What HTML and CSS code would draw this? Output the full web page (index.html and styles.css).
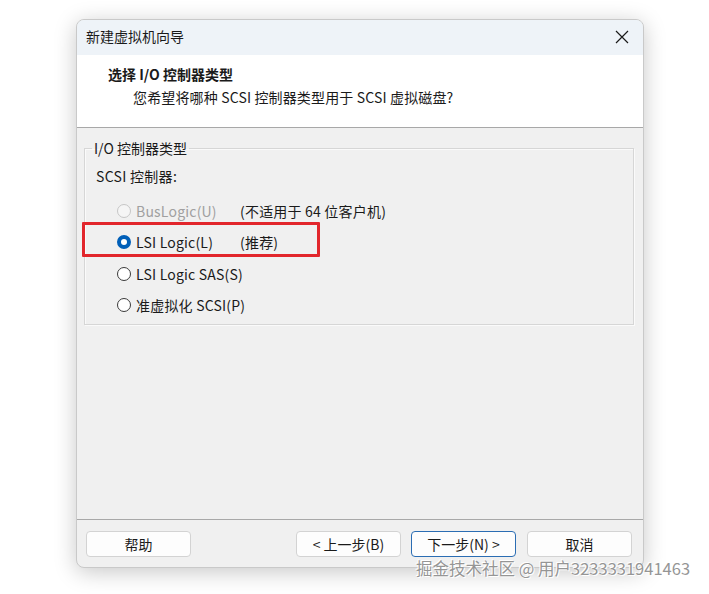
FILE: index.html
```html
<!DOCTYPE html>
<html lang="zh-CN">
<head>
<meta charset="utf-8">
<link rel="stylesheet" href="styles.css">
</head>
<body>
<div class="window">
  <div class="titlebar">
    <span class="title">新建虚拟机向导</span>
    <svg class="close" width="14" height="14" viewBox="0 0 14 14"><path d="M1 1 L13 13 M13 1 L1 13" stroke="#1a1a1a" stroke-width="1.2" fill="none"/></svg>
  </div>
  <div class="header">
    <div class="h-title">选择 I/O 控制器类型</div>
    <div class="h-sub">您希望将哪种 SCSI 控制器类型用于 SCSI 虚拟磁盘?</div>
  </div>
  <div class="content">
    <fieldset class="group">
      <legend>I/O 控制器类型</legend>
      <div class="caption">SCSI 控制器:</div>
      <div class="rows">
        <div class="row disabled"><span class="radio"></span><span class="lbl">BusLogic(U)</span><span class="note">(不适用于 64 位客户机)</span></div>
        <div class="row"><span class="radio checked"></span><span class="lbl">LSI Logic(L)</span><span class="note">(推荐)</span></div>
        <div class="row"><span class="radio"></span><span class="lbl">LSI Logic SAS(S)</span></div>
        <div class="row"><span class="radio"></span><span class="lbl">准虚拟化 SCSI(P)</span></div>
      </div>
    </fieldset>
    <div class="highlight"></div>
  </div>
  <div class="footer">
    <button class="btn">帮助</button>
    <span class="spacer"></span>
    <button class="btn">&lt; 上一步(B)</button>
    <button class="btn primary">下一步(N) &gt;</button>
    <button class="btn cancel">取消</button>
  </div>
</div>
<div class="watermark">掘金技术社区 @ 用户3233331941463</div>
</body>
</html>
```
FILE: styles.css
```css
html, body {
  margin: 0;
  padding: 0;
  background: #ffffff;
  width: 709px;
  height: 594px;
  overflow: hidden;
  font-family: "Noto Sans CJK SC", "Noto Sans", sans-serif;
  font-size: 14px;
  color: #1a1a1a;
}
body { position: relative; padding-top: 19px; box-sizing: border-box; }
.window {
  margin-left: 76px;
  width: 568px;
  height: 549px;
  box-sizing: border-box;
  border: 1px solid #c9c9c9;
  border-radius: 8px;
  overflow: hidden;
  background: #f0f0f0;
  box-shadow: 0 4px 22px rgba(0,0,0,0.22);
  display: flex;
  flex-direction: column;
}
.titlebar {
  height: 35px;
  background: #eef3f8;
  display: flex;
  align-items: center;
  padding: 0 14px 3px 9px;
  box-sizing: border-box;
  justify-content: space-between;
}
.title { font-size: 14px; line-height: 20px; }
.close { margin-top: 2px; }
.header {
  height: 73px;
  background: #ffffff;
  border-bottom: 1px solid #a8a8a8;
  box-sizing: border-box;
  padding: 9px 0 0 31px;
}
.h-title { font-weight: bold; font-size: 14px; line-height: 20px; }
.h-sub { font-size: 14px; line-height: 20px; margin-top: 3px; padding-left: 25px; letter-spacing: 0.15px; }
.content {
  position: relative;
  flex: 1;
  padding: 11px 9px 0 7px;
  border-bottom: 1px solid #a8a8a8;
}
.group {
  margin: 0;
  padding: 0 0 4px 0;
  border: 1px solid #d6d6d6;
  box-shadow: inset 1px 1px 0 #fafafa, 1px 1px 0 #fafafa;
  height: 186px;
  box-sizing: border-box;
}
.group legend {
  margin-left: 7px;
  padding: 0 2px;
  font-size: 14px;
  line-height: 18px;
}
.caption { padding-left: 11px; line-height: 20px; margin-top: 9px; letter-spacing: 0.3px; }
.rows { margin-top: 9px; }
.row {
  display: flex;
  align-items: center;
  height: 31.5px;
  padding-left: 32px;
  white-space: nowrap;
}
.radio {
  width: 14px;
  height: 14px;
  border-radius: 50%;
  border: 1px solid #3a3a3a;
  box-sizing: border-box;
  background: #fff;
  margin-right: 5px;
  flex: none;
}
.radio.checked {
  border: 4px solid #005fb8;
  background: #fff;
}
.disabled .radio { border-color: #c6c6c6; background: #f5f5f5; }
.disabled .lbl { color: #a0a0a0; }
.lbl { width: 104px; flex: none; letter-spacing: 0.2px; }
.note { flex: none; letter-spacing: 0.2px; }
.highlight {
  position: absolute;
  left: 5px;
  top: 94px;
  width: 238px;
  height: 35px;
  border: 3px solid #e2262c;
  box-sizing: border-box;
  border-radius: 1px;
}
.footer {
  height: 47px;
  display: flex;
  align-items: flex-start;
  padding: 11px 11px 0 9px;
  box-sizing: border-box;
  gap: 10px;
}
.spacer { flex: 1; }
.btn {
  width: 105px;
  height: 26px;
  background: #fdfdfd;
  border: 1px solid #d3d3d3;
  border-radius: 4px;
  font-family: "Noto Sans CJK SC", "Noto Sans", sans-serif;
  font-size: 14px;
  color: #1a1a1a;
  padding: 0;
  line-height: 1;
}
.btn.primary { border-color: #2b6db3; }
.btn.cancel { margin-left: 1px; }
.watermark {
  position: absolute;
  left: 416px;
  top: 556px;
  font-size: 16.5px;
  line-height: 24px;
  color: #959595;
  text-shadow: 0 0 1px #fff, 1px 1px 0 #fff, -1px -1px 0 #fff;
  white-space: nowrap;
}
```
